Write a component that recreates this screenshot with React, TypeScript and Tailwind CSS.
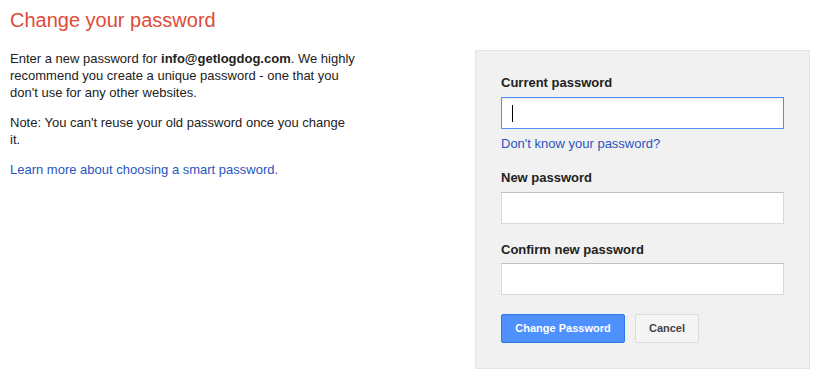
import React from "react";

const font = { fontFamily: '"Liberation Sans", Arial, sans-serif' };

function Field({ children, focused }: { children?: React.ReactNode; focused?: boolean }) {
  return (
    <div
      className={
        "h-[32px] w-[283px] bg-white border flex items-center pl-[10px] " +
        (focused ? "border-[#4d90fe] shadow-[inset_0_1px_2px_rgba(0,0,0,0.1)]" : "border-[#d9d9d9] border-t-[#c0c0c0]")
      }
    >
      {children}
    </div>
  );
}

export default function App() {
  return (
    <div className="w-[819px] h-[378px] bg-white flex text-[13px] leading-[17px] text-[#222]" style={font}>
      <div className="w-[475px] pl-[10px] pt-[7px]">
        <h1 className="text-[20px] leading-[26px] text-[#dd4b39] font-normal">Change your password</h1>
        <div className="w-[346px] mt-[17px]">
          <p>
            Enter a new password for <b>info@getlogdog.com</b>. We highly recommend you create a unique password - one that you don't use for any other websites.
          </p>
          <p className="mt-[13px]">Note: You can't reuse your old password once you change it.</p>
          <p className="mt-[13px] text-[#2a55c0]">Learn more about choosing a smart password.</p>
        </div>
      </div>
      <div className="mt-[50px] w-[335px] h-[319px] bg-[#f1f1f1] border border-[#e5e5e5] pl-[25px] pt-[23px] flex flex-col">
        <div className="font-bold text-[#222]">Current password</div>
        <div className="mt-[6px]">
          <Field focused>
            <div className="w-px h-[17px] bg-black" />
          </Field>
        </div>
        <div className="mt-[6px] text-[#2a55c0]">Don't know your password?</div>
        <div className="mt-[17px] font-bold">New password</div>
        <div className="mt-[6px]">
          <Field />
        </div>
        <div className="mt-[17px] font-bold">Confirm new password</div>
        <div className="mt-[5px]">
          <Field />
        </div>
        <div className="mt-[19px] flex gap-[10px]">
          <button className="h-[29px] w-[124px] rounded-[2px] bg-[#4d90fe] border border-[#3079ed] text-white font-bold text-[11px]">
            Change Password
          </button>
          <button className="h-[29px] w-[64px] rounded-[2px] bg-[#f5f5f5] border border-[#dcdcdc] text-[#444] font-bold text-[11px]">
            Cancel
          </button>
        </div>
      </div>
    </div>
  );
}
